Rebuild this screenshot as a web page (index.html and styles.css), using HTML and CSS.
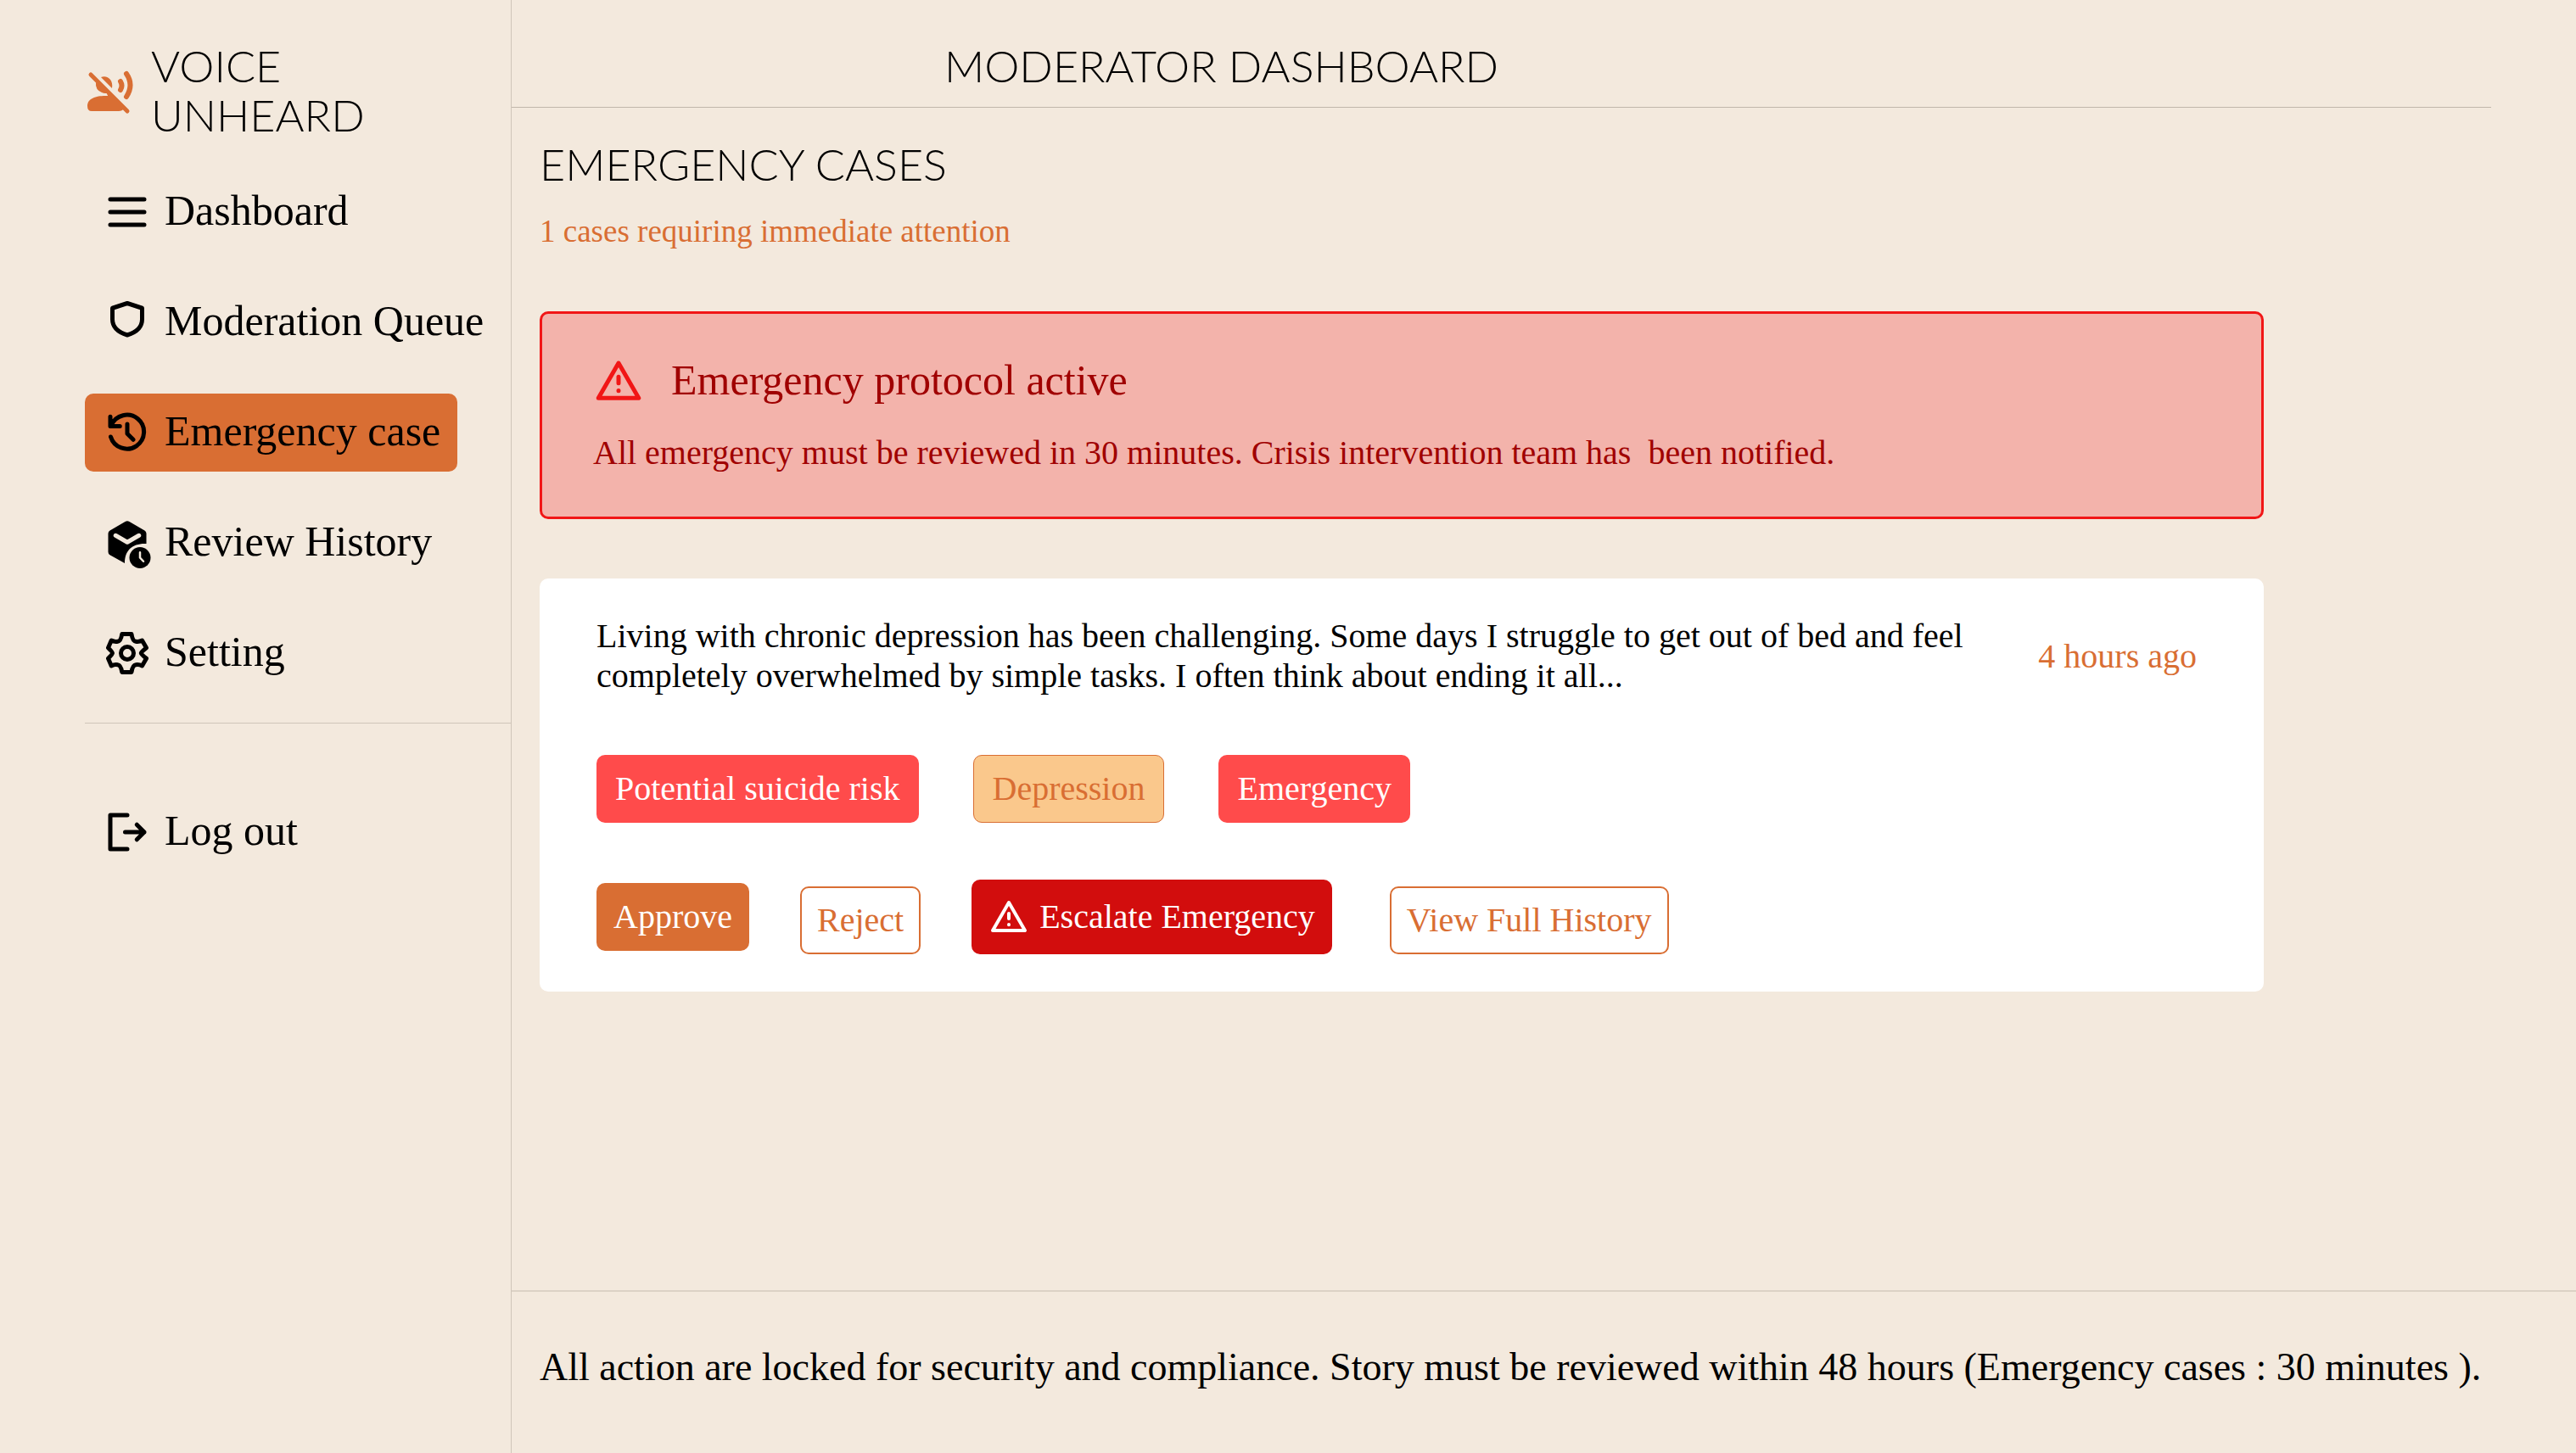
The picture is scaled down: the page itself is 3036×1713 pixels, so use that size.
FILE: index.html
```html
<!DOCTYPE html>
<html lang="en">
<head>
<meta charset="utf-8">
<title>Moderator Dashboard</title>
<link rel="stylesheet" href="styles.css">
</head>
<body>
<div class="app">
  <aside class="sidebar">
    <div class="brand">
      <svg class="brand-icon" viewBox="0 -2 60 60" aria-hidden="true">
        <path fill="currentColor" d="M13 19 L28 31 Q24 33 20 31 Q12 28 13 19Z M19 13 C26 10 34 16 32 26Z M31 35 L46 50 Q44 53 40 53 H8 Q3 53 3 47 C3 38 13 35 24 35Z M24 28 L34 38 L28 37Z"/>
        <path d="M7 10 L50 53" fill="none" stroke="currentColor" stroke-width="5" stroke-linecap="round"/>
        <path d="M42 18 Q45 23 42 28 M49 9 Q58 22 49 36" fill="none" stroke="currentColor" stroke-width="6" stroke-linecap="round"/>
      </svg>
      <span class="brand-name">VOICE UNHEARD</span>
    </div>
    <nav class="nav">
      <a class="nav-item" href="#"><svg class="icon" viewBox="0 0 24 24"><path d="M4 6h16M4 12h16M4 18h16"/></svg>Dashboard</a>
      <a class="nav-item" href="#"><svg class="icon" viewBox="0 0 24 24"><path d="M12 3l7 2.300v5.200c0 4-3 6.300-7 7.500c-4-1.200-7-3.500-7-7.500V5.300z"/></svg>Moderation Queue</a>
      <a class="nav-item active" href="#"><svg class="icon" viewBox="0 0 24 24"><path d="M4 4.500v4.500h4.500M4.500 8.500a8 8 0 1 1-.300 5.500M12 8v4.500l2.800 2.800"/></svg>Emergency case</a>
      <a class="nav-item" href="#"><svg class="icon" viewBox="0 0 24 24"><path class="solid" d="M11 2l-7.200 4.200Q3 6.700 3 7.600v8.700q0 .900.800 1.400l7 3.900c0-6 3.500-9.500 10.200-9.200V7.600q0-.900-.800-1.400L13 2q-1-.600-2 0z"/><circle class="solid" cx="18" cy="19" r="5"/><path class="knock" d="M6.500 8.500l5.500 3.200 5.500-3.200"/><path class="knock thin" d="M18 16.500V19l1.600 1.700"/></svg>Review History</a>
      <a class="nav-item" href="#"><svg class="icon" viewBox="0 0 24 24"><path d="M9.500 3h4.500q.500 3.300 2 3.500 1.500.300 3-.500l2 3.500q-2.500 2-2.500 2.500t2.500 2.500l-2 3.500q-1.500-.800-3-.500-1.500.200-2 3.500H9.500q-.500-3.300-2-3.500-1.500-.300-3 .500l-1.500-3.500q2-2 2-2.500T3 9.500L4.500 6q1.500.800 3 .500 1.500-.200 2-3.500z"/><circle cx="12" cy="12" r="3"/></svg>Setting</a>
    </nav>
    <nav class="nav nav-exit">
      <a class="nav-item" href="#"><svg class="icon" viewBox="0 0 24 24"><path d="M12 4H4v16h8M11 12h9M16.500 8.500L20 12l-3.500 3.500"/></svg>Log out</a>
    </nav>
  </aside>
  <div class="main">
    <header class="topbar"><h1 class="title">MODERATOR DASHBOARD</h1></header>
    <main class="content">
      <h2 class="title">EMERGENCY CASES</h2>
      <p class="summary">1 cases requiring immediate attention</p>
      <section class="alert">
        <h3 class="alert-title"><svg class="icon alert-icon" viewBox="0 0 24 24"><path d="M12 4L21.500 20.500h-19zM12 10.500v3M12 17v.100"/></svg>Emergency protocol active</h3>
        <p class="alert-text">All emergency must be reviewed in 30 minutes. Crisis intervention team has&nbsp; been notified.</p>
      </section>
      <article class="case">
        <div class="case-head">
          <p class="story">Living with chronic depression has been challenging. Some days I struggle to get out of bed and feel completely overwhelmed by simple tasks. I often think about ending it all...</p>
          <time class="age">4 hours ago</time>
        </div>
        <div class="tags">
          <span class="pill tag risk">Potential suicide risk</span>
          <span class="pill tag topic">Depression</span>
          <span class="pill tag risk">Emergency</span>
        </div>
        <div class="actions">
          <button class="pill approve">Approve</button>
          <button class="pill outline">Reject</button>
          <button class="pill escalate"><svg class="icon pill-icon" viewBox="0 0 24 24"><path d="M12 3.500L21.500 20h-19zM12 10v3M12 16.500v.100"/></svg>Escalate Emergency</button>
          <button class="pill outline history">View Full History</button>
        </div>
      </article>
    </main>
    <footer class="footer">All action are locked for security and compliance. Story must be reviewed within 48 hours (Emergency cases : 30 minutes ).</footer>
  </div>
</div>
</body>
</html>
```
FILE: styles.css
```css
* { box-sizing: border-box; }
body, h1, h2, h3, p { margin: 0; font-weight: 400; }
body {
  background: #f3e9dd;
  color: #000;
  font-family: "Liberation Serif", serif;
  font-size: 40px;
}
.app { display: flex; min-height: 100vh; }
.sidebar {
  flex: none;
  width: 603px;
  border-right: 1px solid #cfc5b9;
  padding-left: 100px;
}
.brand { display: flex; align-items: center; gap: 18px; padding-top: 48px; }
.brand-icon { width: 60px; height: 60px; color: #d96e33; flex: none; }
.brand-name, .title {
  font-family: Lato, sans-serif;
  font-weight: 300;
  font-size: 52px;
  line-height: 58px;
}
.brand-name { width: 300px; }
.nav {
  display: flex;
  flex-direction: column;
  align-items: flex-start;
  gap: 38px;
  padding: 40px 0 36px;
}
.nav-exit { border-top: 1px solid #cfc5b9; padding: 82px 0; }
.nav-item {
  display: flex;
  align-items: flex-start;
  gap: 14px;
  padding: 16px 20px;
  border-radius: 10px;
  font-size: 50px;
  line-height: 56px;
  color: #000;
  text-decoration: none;
  white-space: nowrap;
}
.active { background: #d96e33; }
.icon {
  width: 60px;
  height: 60px;
  flex: none;
  overflow: visible;
  fill: none;
  stroke: currentColor;
  stroke-width: 2;
  stroke-linecap: round;
  stroke-linejoin: round;
}
.icon .solid { fill: currentColor; stroke: none; }
.icon .knock { stroke: #f3e9dd; }
.icon .thin { stroke-width: 1; }
.main { flex: 1; display: flex; flex-direction: column; min-width: 0; }
.topbar {
  margin-right: 100px;
  padding: 48px 100px 20px 510px;
  border-bottom: 1px solid #c0b6aa;
}
.content { flex: 1; padding: 37px 368px 0 33px; }
.summary { margin-top: 28px; color: #d96e33; font-size: 37px; line-height: 46px; }
.alert {
  margin-top: 71px;
  padding: 48px 60px 45px;
  border: 3px solid #f11616;
  border-radius: 10px;
  background: #f3b3ab;
  color: #a00000;
}
.alert-title { display: flex; align-items: center; gap: 32px; font-size: 50px; line-height: 60px; }
.alert-icon { color: #f11616; }
.alert-text { margin-top: 26px; line-height: 60px; }
.case { margin-top: 70px; padding: 44px 67px; background: #fff; border-radius: 10px; }
.case-head { display: flex; align-items: center; justify-content: space-between; gap: 80px; padding-right: 12px; }
.story { flex: 1; line-height: 47px; }
.age { color: #d96e33; white-space: nowrap; }
.tags, .actions { display: flex; }
.tags { margin-top: 70px; gap: 64px; }
.actions { margin-top: 67px; gap: 60px; align-items: center; }
.pill {
  display: flex;
  align-items: center;
  justify-content: center;
  gap: 12px;
  min-height: 80px;
  padding: 0 20px;
  border: 0;
  border-radius: 10px;
  font: inherit;
  line-height: 46px;
  color: #fff;
  white-space: nowrap;
}
.tag { padding: 0 22px; }
.risk { background: #ff4b4b; }
.topic { background: #fac88c; border: 1px solid #d96e33; color: #d96e33; }
.approve { background: #d96e33; }
.outline { align-self: flex-end; padding: 0 18px; background: #fff; border: 2px solid #d96e33; color: #d96e33; }
.history { margin-left: 8px; }
.escalate { min-height: 88px; background: #d20d0d; }
.pill-icon { width: 48px; height: 48px; }
.footer { border-top: 2px solid #dcd2c5; padding: 59px 33px 71px; font-size: 46px; line-height: 60px; }
```
